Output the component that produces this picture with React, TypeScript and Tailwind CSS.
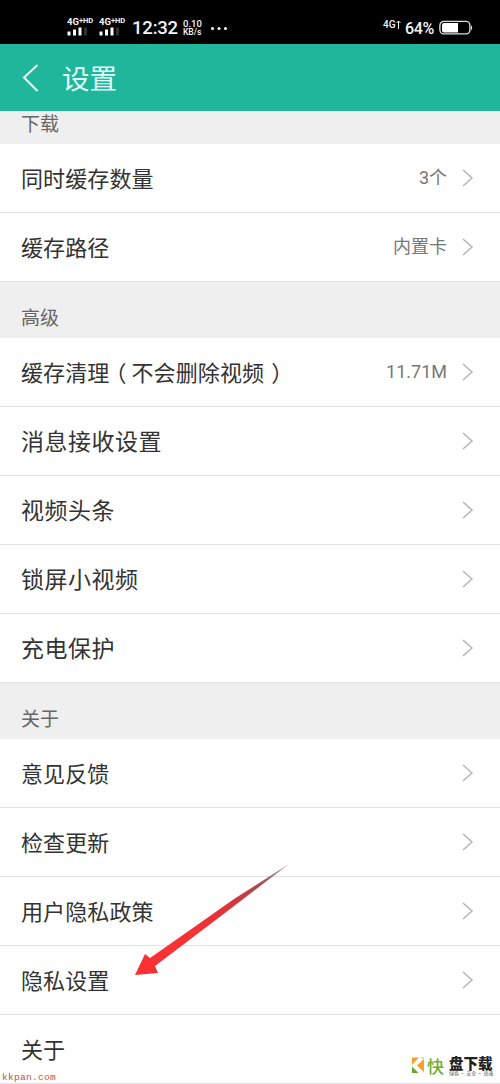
import type { ReactNode } from 'react';

type Item = {
  label: ReactNode;
  value?: string;
  wide?: boolean;
  hideArrow?: boolean;
};

const downloadItems: Item[] = [
  { label: '同时缓存数量', value: '3个' },
  { label: '缓存路径', value: '内置卡' },
];

const advancedItems: Item[] = [
  {
    label: (
      <>
        缓存清理<span className="relative -left-[5px]">（</span>不会删除视频
        <span className="relative left-[7px]">）</span>
      </>
    ),
    value: '11.71M',
  },
  { label: '消息接收设置', wide: true },
  { label: '视频头条', wide: true },
  { label: '锁屏小视频', wide: true },
  { label: '充电保护', wide: true },
];

const aboutItems: Item[] = [
  { label: '意见反馈' },
  { label: '检查更新' },
  { label: '用户隐私政策' },
  { label: '隐私设置' },
  { label: '关于', hideArrow: true },
];

const Signal = () => (
  <div className="flex flex-col w-[27px]">
    <div className="flex items-start leading-none">
      <span className="text-[9.5px] leading-[10px] font-bold">4G</span>
      <span className="text-[7.5px] leading-[7px] font-bold whitespace-nowrap">+HD</span>
    </div>
    <svg width="21" height="9" viewBox="0 0 21 9">
      <rect x="0.5" y="4.5" width="3" height="4" fill="#fff" />
      <rect x="6" y="2.5" width="3" height="6" fill="#fff" />
      <rect x="11.5" y="0.5" width="3" height="8" fill="#fff" />
      <rect x="17" y="0.5" width="3" height="8" fill="#333" />
    </svg>
  </div>
);

const StatusBar = () => (
  <div className="flex h-11 bg-black text-[#f4f4f4] font-['Roboto',sans-serif]">
    <div className="flex items-start pl-[67px] pt-[17px]">
      <Signal />
      <div className="ml-[5px]">
        <Signal />
      </div>
      <span className="ml-[6px] w-[46px] text-[18.5px] leading-[23px] font-medium tracking-[-0.2px] whitespace-nowrap">
        12:32
      </span>
      <div className="ml-[5px] mt-[2px] w-[20px] text-[9.5px] leading-[9px] font-medium whitespace-nowrap">
        <div>0.10</div>
        <div className="text-[8.5px]">KB/s</div>
      </div>
      <svg width="18" height="5" viewBox="0 0 18 5" className="ml-[7px] mt-[9px]">
        <circle cx="2.5" cy="2.5" r="1.5" fill="#fff" />
        <circle cx="9" cy="2.5" r="1.5" fill="#fff" />
        <circle cx="15.5" cy="2.5" r="1.5" fill="#fff" />
      </svg>
    </div>
    <div className="ml-auto flex items-start pr-[27px] pt-[17px]">
      <div className="flex w-[18px] pt-[3px]">
        <span className="text-[10px] leading-[10px] font-medium">4G</span>
        <svg width="5" height="9" viewBox="0 0 5 9" fill="none" stroke="#f4f4f4">
          <path d="M2.5 9V1M0.5 3l2-2 2 2" />
        </svg>
      </div>
      <span className="ml-[4px] w-[30px] text-[16px] leading-[23px] font-medium tracking-[-0.3px] whitespace-nowrap">
        64%
      </span>
      <svg width="34" height="16" viewBox="0 0 34 16" className="ml-[4px] mt-[3px]">
        <rect x="0.9" y="1.4" width="30" height="12.5" rx="4" fill="none" stroke="#ddd" strokeWidth="1.4" />
        <path d="M5 3h14v9.5H5a2 2 0 0 1-2-2V5a2 2 0 0 1 2-2z" fill="#fff" />
        <path d="M32 5.5c1.5 0.5 1.5 4 0 4.5z" fill="#ddd" />
      </svg>
    </div>
  </div>
);

const Header = () => (
  <header className="flex h-[67px] items-center bg-[#1fb69b] pl-[22px] text-[#e2fff8]">
    <svg width="18" height="30" viewBox="0 0 18 30" fill="none" stroke="currentColor" strokeWidth="2">
      <path d="M15.5 2L2 14.5 15.5 28" />
    </svg>
    <h1 className="ml-[22px] pt-[5px] text-[27.5px] leading-10">设置</h1>
  </header>
);

const SectionTitle = ({ title }: { title: string }) => (
  <div className="flex h-14 items-end bg-[#efefef] pb-[5px] pl-[21px] text-[19px] leading-7 text-[#666]">
    {title}
  </div>
);

const Row = ({ label, value, wide, hideArrow }: Item) => (
  <div className="flex h-[69px] items-center border-b border-[#e2e2e2] bg-white pl-[21px] pr-[26px] text-[#333]">
    <span
      className={`pt-[4px] leading-8 whitespace-nowrap ${
        wide ? 'text-[23px] tracking-[0.5px]' : 'text-[22px] tracking-[0.1px]'
      }`}
    >
      {label}
    </span>
    {value && <span className="ml-auto text-[18px] leading-6 text-[#777]">{value}</span>}
    {!hideArrow && (
      <svg
        width="12"
        height="18"
        viewBox="0 0 12 18"
        fill="none"
        stroke="#b5b5b5"
        strokeWidth="1.5"
        className={value ? 'ml-[15px]' : 'ml-auto'}
      >
        <path d="M1 1l9 8-9 8" />
      </svg>
    )}
  </div>
);

const Arrow = () => (
  <svg className="absolute left-[130px] top-[860px]" width="165" height="120" viewBox="0 0 165 120">
    <defs>
      <linearGradient id="arrow" x1="160" y1="4" x2="60" y2="75" gradientUnits="userSpaceOnUse">
        <stop offset="0" stopColor="#999" />
        <stop offset="0.3" stopColor="#a94a50" />
        <stop offset="0.6" stopColor="#dc3438" />
        <stop offset="1" stopColor="#f83234" />
      </linearGradient>
    </defs>
    <path d="M159 4L104 39 70 63 20 98 15 94 5 115l23-2-3-7L87 59z" fill="url(#arrow)" />
  </svg>
);

const Watermark = () => (
  <div className="absolute left-[411px] top-[1056px] flex items-start font-['Noto_Sans_CJK_SC',sans-serif]">
    <svg width="14" height="18" viewBox="0 0 14 18">
      <path d="M1 1.5h7L1 9z" fill="#f3a12c" />
      <path d="M9.5 1.5H13V17L5.5 9.5 12 3z" fill="#f3a12c" />
      <path d="M1 10.5L7.5 17H1z" fill="#67a82d" />
      <path d="M12.5 2.5L5 9.5l7.5 7" fill="none" stroke="#fff" strokeWidth="1.3" />
    </svg>
    <span className="ml-[2px] w-[18px] text-[17px] leading-[19px] font-medium text-[#70ae32]">快</span>
    <div className="ml-[4px]">
      <div className="text-[14.5px] leading-[14px] font-black text-[#222] whitespace-nowrap">盘下载</div>
      <div className="text-[5px] leading-[5px] text-[#555] whitespace-nowrap">绿色 · 安全 · 高速</div>
    </div>
  </div>
);

export default function App() {
  return (
    <div className="relative h-[1084px] w-[500px] overflow-hidden bg-white font-['Roboto','Noto_Sans_CJK_SC',sans-serif]">
      <StatusBar />
      <Header />

      {/* Scrolled list, the first title is partly under the header */}
      <main className="h-[973px] overflow-hidden">
        <div className="-mt-[23px]">
          <SectionTitle title="下载" />
        </div>
        {downloadItems.map((item, i) => (
          <Row key={i} {...item} />
        ))}
        <SectionTitle title="高级" />
        {advancedItems.map((item, i) => (
          <Row key={i} {...item} />
        ))}
        <SectionTitle title="关于" />
        {aboutItems.map((item, i) => (
          <Row key={i} {...item} />
        ))}
      </main>

      <Arrow />
      <span className="absolute left-[2px] top-[1072px] font-['Liberation_Mono',monospace] text-[9.5px] leading-3 tracking-[0.3px] text-[#c0504d]">
        kkpan.com
      </span>
      <Watermark />
    </div>
  );
}
